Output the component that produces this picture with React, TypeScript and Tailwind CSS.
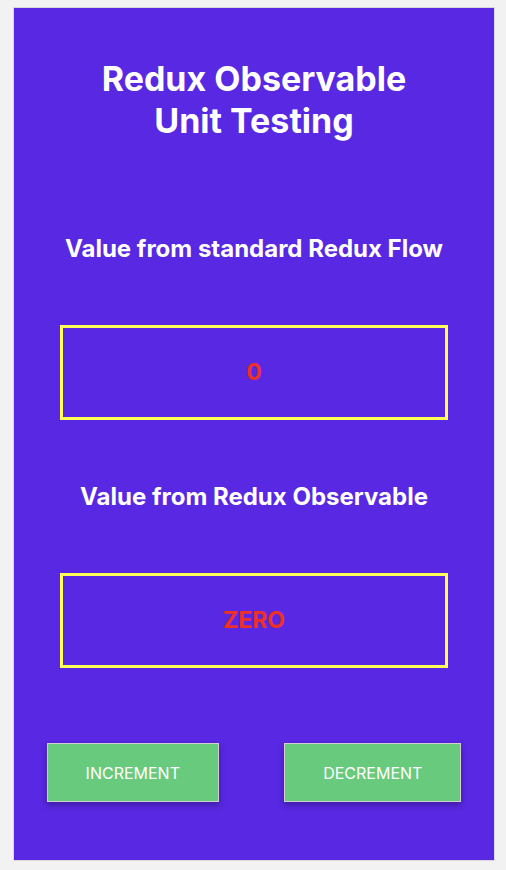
import React, { useState } from "react";

const ValueBox = ({ children }: { children: React.ReactNode }) => (
  <div className="mx-[46px] h-[95px] border-[3px] border-[#ffff55] flex items-center justify-center">
    <span className="text-[23px] font-bold text-[#ee3124]">{children}</span>
  </div>
);

export default function App() {
  const [count, setCount] = useState(0);
  const words = ["ZERO", "ONE", "TWO", "THREE", "FOUR", "FIVE"];

  return (
    <div
      className="min-h-screen bg-[#f2f2f2] pt-[7px] pl-[13px]"
      style={{ fontFamily: "Inter, 'Noto Sans', sans-serif" }}
    >
      <div className="w-[482px] h-[854px] border border-[#d8d8d8] bg-[#5828e2] text-white flex flex-col">
        <h1 className="mt-[50px] text-center text-[34px] leading-[42px] font-bold">
          Redux Observable
          <br />
          Unit Testing
        </h1>

        <h2 className="mt-[89px] text-center text-[24px] font-bold">
          Value from standard Redux Flow
        </h2>
        <div className="mt-[58px]">
          <ValueBox>{count}</ValueBox>
        </div>

        <h2 className="mt-[59px] text-center text-[24px] font-bold">
          Value from Redux Observable
        </h2>
        <div className="mt-[58px]">
          <ValueBox>{words[count] ?? String(count)}</ValueBox>
        </div>

        <div className="mt-[75px] flex justify-around">
          <button
            onClick={() => setCount(count + 1)}
            className="h-[59px] px-[38px] bg-[#68ca7c] border border-[#d0d0d0] text-[16px] text-white shadow-[0_3px_6px_rgba(0,0,0,0.3)]"
          >
            INCREMENT
          </button>
          <button
            onClick={() => setCount(count - 1)}
            className="h-[59px] px-[38px] bg-[#68ca7c] border border-[#d0d0d0] text-[16px] text-white shadow-[0_3px_6px_rgba(0,0,0,0.3)]"
          >
            DECREMENT
          </button>
        </div>
      </div>
    </div>
  );
}
